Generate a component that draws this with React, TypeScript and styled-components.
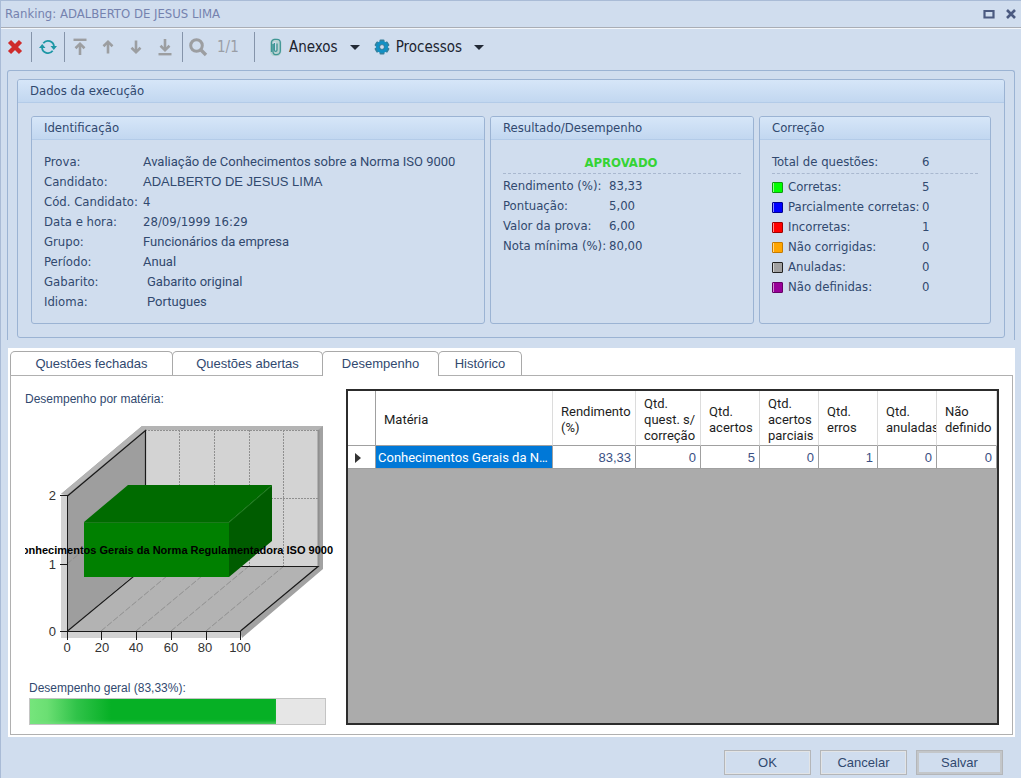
import React from "react";
import styled, { createGlobalStyle } from "styled-components";

const UI = `"DejaVu Sans Condensed", "DejaVu Sans", sans-serif`;
const SANS = `"Liberation Sans", Arial, sans-serif`;
const VALUE = `Roboto, "Liberation Sans", sans-serif`;
const INK = "#31496f";
const LINE = "#9bb3d3";

const GlobalStyle = createGlobalStyle`
  *, *::before, *::after { box-sizing: border-box; }
  body { margin: 0; background: #d0ddee; }
  button { font: inherit; color: inherit; cursor: pointer; }
`;

const Window = styled.div`
  min-height: 100vh;
  display: flex;
  flex-direction: column;
  background: #d0ddee;
  border-left: 1px solid #a9bbd6;
  border-top: 1px solid #a9bbd6;
  color: ${INK};
  font: 13px/20px ${SANS};
`;

const TitleBar = styled.header`
  height: 27px;
  flex: none;
  display: flex;
  align-items: center;
  justify-content: space-between;
  padding: 0 4px;
  border-bottom: 1px solid #a9adb5;
  box-shadow: 0 1px 0 #f3f6fa;
`;

const Title = styled.h1`
  margin: 0;
  font: 13px/20px ${UI};
  color: #7582ae;
`;

const WindowButtons = styled.div`
  display: flex;
  gap: 10px;
`;

const WindowButton = styled.button`
  display: flex;
  padding: 0;
  border: 0;
  background: none;
`;

const Toolbar = styled.div`
  height: 42px;
  flex: none;
  display: flex;
  align-items: center;
  padding-bottom: 4px;
  font: 15px/20px ${UI};
  color: #1c2430;
`;

const Tool = styled.button<{ $width: number }>`
  width: ${(p) => p.$width}px;
  height: 30px;
  flex: none;
  display: flex;
  align-items: center;
  justify-content: center;
  padding: 0;
  border: 0;
  background: none;
`;

const MenuTool = styled.button`
  display: flex;
  align-items: center;
  gap: 6px;
  height: 30px;
  padding: 0 0 0 14px;
  border: 0;
  background: none;
`;

const Separator = styled.span`
  width: 1px;
  height: 30px;
  margin: 0 1px 0 2px;
  background: #8594aa;
`;

const Counter = styled.output`
  width: 40px;
  padding-left: 5px;
  color: #9a9ea6;
`;

const Caret = styled.span`
  margin-left: 6px;
  border: 5px solid transparent;
  border-top-color: #222a36;
  border-bottom: 0;
`;

const Frame = styled.div`
  margin: 0 6px 0 6px;
  padding: 8px 9px 2px;
  border: 1px solid ${LINE};
  border-bottom: 0;
  border-radius: 3px 3px 0 0;
`;

const Group = styled.section`
  border: 1px solid ${LINE};
  border-radius: 3px;
`;

const GroupTitle = styled.h2`
  height: 23px;
  margin: 0;
  padding: 1px 12px;
  border-bottom: 1px solid #b3cbe8;
  border-radius: 2px 2px 0 0;
  background: linear-gradient(#d6e6f8, #c2d7f0);
  font: 13px/20px ${UI};
`;

const GroupGrid = styled.div`
  display: grid;
  grid-template-columns: 454fr 264fr 232fr;
  gap: 5px;
  padding: 13px;
`;

const GroupBody = styled.div`
  height: 183px;
  padding: 12px 12px 0;
`;

const Fields = styled.dl<{ $label: number }>`
  display: grid;
  grid-template-columns: ${(p) => p.$label}px 1fr;
  grid-auto-rows: 20px;
  margin: 0;
`;

const Term = styled.dt`
  display: flex;
  align-items: center;
  gap: 5px;
  font: 13px/20px ${UI};
  white-space: nowrap;
`;

const Value = styled.dd<{ $indent?: boolean; $family?: string }>`
  margin: 0;
  padding-left: ${(p) => (p.$indent ? 4 : 0)}px;
  font-family: ${(p) => p.$family ?? VALUE};
  white-space: nowrap;
`;

const Verdict = styled.p`
  margin: 0 0 2px;
  padding-right: 2px;
  border-bottom: 1px dashed #a9b8cf;
  font: bold 13px/21px ${UI};
  text-align: center;
  color: #35d435;
`;

const Total = styled(Fields)`
  margin-bottom: 3px;
  padding-bottom: 1px;
  border-bottom: 1px dashed #a9b8cf;
`;

const Swatch = styled.span<{ $fill: string; $edge: string }>`
  width: 11px;
  height: 11px;
  border: 1px solid ${(p) => p.$edge};
  border-radius: 1px;
  background: ${(p) => p.$fill};
  box-shadow: inset 1px 0 0 rgba(255, 255, 255, 0.55);
`;

const Sheet = styled.main`
  flex: 1;
  display: flex;
  flex-direction: column;
  margin: 8px 6px 0 7px;
  padding: 3px 2px 2px;
  background: #fff;
`;

const Tabs = styled.div`
  display: flex;
  height: 24px;
  flex: none;
`;

const Tab = styled.button<{ $width: number; $active?: boolean }>`
  width: ${(p) => p.$width}px;
  height: ${(p) => (p.$active ? 25 : 24)}px;
  z-index: ${(p) => (p.$active ? 1 : 0)};
  padding: 0 0 ${(p) => (p.$active ? 1 : 0)}px;
  border: 1px solid #a9a9a9;
  border-bottom: 0;
  border-radius: 5px 5px 0 0;
  background: #fff;
  font: 13px/22px ${SANS};
  & + & { margin-left: -1px; }
`;

const TabPanel = styled.div`
  flex: 1;
  display: flex;
  gap: 6px;
  padding: 13px 13px 9px 14px;
  border: 1px solid #b0b0b0;
`;

const ChartColumn = styled.div`
  width: 315px;
  flex: none;
  display: flex;
  flex-direction: column;
`;

const Caption = styled.p`
  margin: 0;
  font-size: 12px;
`;

const Chart = styled.svg`
  display: block;
  margin-top: 6px;
  font: 13px ${SANS};
  fill: #333;
`;

const Overall = styled.div`
  margin-top: auto;
  padding: 0 14px 0 4px;
`;

const Track = styled.div`
  height: 27px;
  border: 1px solid #c4c4c4;
  background: #e6e6e6;
`;

const Fill = styled.div`
  height: 100%;
  background: linear-gradient(90deg, #76e57c 0, #6bdf73 7%, #30c349 19%, #06b025 33%);
  box-shadow: inset 0 -3px 3px -1px rgba(120, 225, 130, 0.6);
`;

const GridBox = styled.div`
  flex: 1;
  min-width: 0;
  border: 2px solid #2c2c2c;
  background: #ababab;
`;

const Table = styled.table`
  width: 100%;
  table-layout: fixed;
  border-collapse: separate;
  border-spacing: 0;
  background: #fff;
`;

const Col = styled.col<{ $width?: number }>`
  width: ${(p) => (p.$width ? p.$width + "px" : "auto")};
`;

const HeadCell = styled.th`
  height: 55px;
  padding: 3px 0 0 8px;
  overflow: hidden;
  border-right: 1px solid #dcdcdc;
  border-bottom: 1px solid #a0a0a0;
  font: 13px/16px ${VALUE};
  text-align: left;
  color: #1d1d22;
  &:first-child { border-right-color: #a0a0a0; }
`;

const Cell = styled.td<{ $selected?: boolean }>`
  height: 23px;
  padding: ${(p) => (p.$selected ? "1px 1px 0 2px" : "1px 4px 0 3px")};
  overflow: hidden;
  border-right: 1px solid #a0a0a0;
  border-bottom: 1px solid #a0a0a0;
  background: ${(p) => (p.$selected ? "#0078d7" : "#fff")};
  color: ${(p) => (p.$selected ? "#fff" : "#3a5084")};
  font: 13px/20px ${(p) => (p.$selected ? VALUE : SANS)};
  text-align: ${(p) => (p.$selected ? "left" : "right")};
  text-overflow: ellipsis;
  white-space: nowrap;
`;

const RowMarker = styled.span`
  display: block;
  width: 0;
  margin-left: 4px;
  border: 5px solid transparent;
  border-left: 6px solid #333;
  border-right: 0;
`;

const Footer = styled.footer`
  height: 41px;
  flex: none;
  display: flex;
  justify-content: flex-end;
  align-items: flex-start;
  gap: 9px;
  padding: 13px 18px 0;
`;

const DialogButton = styled.button<{ $default?: boolean }>`
  width: 87px;
  height: 25px;
  padding: 0;
  border: 1px solid #b4b6b9;
  background: #d0ddee;
  box-shadow: inset 0 0 0 ${(p) => (p.$default ? 2 : 1)}px ${(p) => (p.$default ? "#c3c6c9" : "#e2e4e6")};
  font: 13px/20px ${SANS};
`;

const GREY = "#9c9ea1";

const ArrowIcon = ({ down, bar }: { down?: boolean; bar?: boolean }) => (
  <svg width="16" height="18" viewBox="0 0 16 18" fill="none" stroke={GREY} strokeWidth="2.6">
    <g transform={down ? "rotate(180 8 9)" : undefined}>
      {bar && <path d="M1.5 1.8h13" strokeWidth="2.4" />}
      <path d={bar ? "M8 17V6" : "M8 15.500V4.500"} />
      <path d={bar ? "M3.500 10.200L8 5.800l4.500 4.400" : "M3.500 8.200L8 3.800l4.500 4.400"} />
    </g>
  </svg>
);

const DeleteIcon = () => (
  <svg width="16" height="16" viewBox="0 0 16 16" stroke="#cf2b2b" strokeWidth="4.4">
    <path d="M2.500 2.500l11 11M13.500 2.500l-11 11" />
  </svg>
);

const RefreshIcon = () => (
  <svg width="18" height="16" viewBox="0 0 18 16" fill="none" stroke="#1d97a5" strokeWidth="1.8">
    <path d="M4.300 4.200A6 6 0 0 1 15 7.500M13.700 11.800A6 6 0 0 1 3 8.500" />
    <path d="M11.500 7h6.500l-3.200 4zM0 9h6.500L3.200 5z" fill="#1d97a5" stroke="none" />
  </svg>
);

const SearchIcon = () => (
  <svg width="20" height="20" viewBox="0 0 20 20" fill="none" stroke={GREY}>
    <circle cx="8.500" cy="8.500" r="5.800" strokeWidth="3" />
    <path d="M12.500 12.500l5.500 5.500" strokeWidth="3.400" />
  </svg>
);

const ClipIcon = () => (
  <svg width="13" height="18" viewBox="0 0 13 18" fill="none">
    <path
      d="M3.500 5.500v7.300a2 2 0 0 0 4 0V5a3 3 0 0 0-6 0v8a3.800 3.800 0 0 0 8.500 0V3.500"
      stroke="#b9d2d2"
      strokeWidth="3"
    />
    <path
      d="M7 5.500v6.500a1.200 1.200 0 0 1-2.600 0V5M1.500 14V4.500A3.300 3.300 0 0 1 5 1.300h2a3.300 3.300 0 0 1 3.300 3.300V13a3.800 3.800 0 0 1-3.800 3.700c-1.800 0-3.500-1-3.500-3V6"
      stroke="#3f9696"
      strokeWidth="1.300"
    />
  </svg>
);

const GearIcon = () => (
  <svg width="16" height="16" viewBox="0 0 16 16">
    {[0, 60, 120].map((a) => (
      <rect key={a} x="5.500" y="0.500" width="5" height="15" rx="1" fill="#37809c" transform={`rotate(${a} 8 8)`} />
    ))}
    <circle cx="8" cy="8" r="6" fill="#1290c4" />
    <circle cx="8" cy="8" r="2.400" fill="#d0ddee" stroke="#2d6c86" strokeWidth="0.800" />
  </svg>
);

const PerformanceChart = () => (
  <Chart width="309" height="245" viewBox="0 0 309 245" role="img" aria-label="Desempenho por matéria">
    <path d="M42 80L36 79 117 11H298V154L217 223 215 216z" fill="#a2a2a2" />
    <path d="M36 79L117 11H298L293 15H120L42 80z" fill="#b4b4b4" />
    <path d="M36 80h6v137h173v6H36z" fill="#d3d3d3" />
    <path d="M120 15H293V151H120z" fill="#d3d3d3" />
    <path d="M42 80L120 15V151L42 216z" fill="#9e9e9e" />
    <path d="M42 216L120 151H293L215 216z" fill="#b3b3b3" />
    <g stroke="#8f8f8f" fill="none">
      <path d="M154.500 15V151M189.500 15V151M224.500 15V151M258.500 15V151M120 15.500H293M120 83.500H293" strokeDasharray="2 1" />
      <path d="M76 216L154 151M111 216L189 151M146 216L224 151M181 216L259 151M42 149L120 83" strokeDasharray="6 2" />
      <path d="M293.500 15V151" strokeWidth="2" />
    </g>
    <g stroke="#1a1a1a" fill="none">
      <path d="M42.500 81L120.500 15.500V151M42.500 216L120.500 151.500H293L215.500 216" strokeWidth="1.200" />
      <path d="M42.500 80V225M35 80.500h7M35 149.500h7M35 216.500H216M76.500 216v9M111.500 216v9M146.500 216v9M181.500 216v9M215.500 216v9" />
    </g>
    <path d="M59 107H204V162H59z" fill="#008000" />
    <path d="M59 107L103 70H247L204 107z" fill="#006b00" />
    <path d="M204 107L247 70V126L204 162z" fill="#005c00" />
    <path d="M59 107.500H204L247 70.500" fill="none" stroke="#1c7a1c" />
    <g textAnchor="end">
      <text x="31" y="85">2</text>
      <text x="31" y="154">1</text>
      <text x="31" y="221">0</text>
    </g>
    <g textAnchor="middle">
      {[0, 20, 40, 60, 80, 100].map((n, i) => (
        <text key={n} x={42 + Math.round(i * 34.6)} y="237">{n}</text>
      ))}
    </g>
    <text x="308" y="139" textAnchor="end" fontSize="11" fontWeight="bold" fill="#000">
      Conhecimentos Gerais da Norma Regulamentadora ISO 9000
    </text>
  </Chart>
);

const identification: { label: string; value: string; indent?: boolean; family?: string }[] = [
  { label: "Prova:", value: "Avaliação de Conhecimentos sobre a Norma ISO 9000" },
  { label: "Candidato:", value: "ADALBERTO DE JESUS LIMA", family: SANS },
  { label: "Cód. Candidato:", value: "4", family: UI },
  { label: "Data e hora:", value: "28/09/1999 16:29", family: UI },
  { label: "Grupo:", value: "Funcionários da empresa" },
  { label: "Período:", value: "Anual" },
  { label: "Gabarito:", value: "Gabarito original", indent: true },
  { label: "Idioma:", value: "Portugues", indent: true },
];

const results = [
  ["Rendimento (%):", "83,33"],
  ["Pontuação:", "5,00"],
  ["Valor da prova:", "6,00"],
  ["Nota mínima (%):", "80,00"],
];

const corrections = [
  { label: "Corretas:", value: 5, fill: "#00ff00", edge: "#0e9a0e" },
  { label: "Parcialmente corretas:", value: 0, fill: "#0000ff", edge: "#00008f" },
  { label: "Incorretas:", value: 1, fill: "#ff0000", edge: "#a00000" },
  { label: "Não corrigidas:", value: 0, fill: "#ffa500", edge: "#c67a00" },
  { label: "Anuladas:", value: 0, fill: "#a0a0a0", edge: "#222222" },
  { label: "Não definidas:", value: 0, fill: "#990099", edge: "#660066" },
];

const columns = [
  { title: "Rendimento (%)", value: "83,33", width: 83 },
  { title: "Qtd. quest. s/ correção", value: "0", width: 65 },
  { title: "Qtd. acertos", value: "5", width: 59 },
  { title: "Qtd. acertos parciais", value: "0", width: 59 },
  { title: "Qtd. erros", value: "1", width: 59 },
  { title: "Qtd. anuladas", value: "0", width: 59 },
  { title: "Não definido", value: "0", width: 60 },
];

const tabs = [
  { title: "Questões fechadas", width: 163 },
  { title: "Questões abertas", width: 151 },
  { title: "Desempenho", width: 117, active: true },
  { title: "Histórico", width: 84 },
];

export default function App() {
  return (
    <Window>
      <GlobalStyle />
      <TitleBar>
        <Title>Ranking: ADALBERTO DE JESUS LIMA</Title>
        <WindowButtons>
          <WindowButton aria-label="Maximizar">
            <svg width="12" height="12" viewBox="0 0 12 12">
              <path d="M1.500 3h9v6.500h-9z" fill="none" stroke="#4b5a80" strokeWidth="2.200" />
            </svg>
          </WindowButton>
          <WindowButton aria-label="Fechar">
            <svg width="12" height="12" viewBox="0 0 12 12">
              <path d="M2 2l8 8M10 2l-8 8" stroke="#4b5a80" strokeWidth="2.600" />
            </svg>
          </WindowButton>
        </WindowButtons>
      </TitleBar>

      <Toolbar role="toolbar">
        <Tool $width={28} aria-label="Excluir"><DeleteIcon /></Tool>
        <Separator />
        <Tool $width={29} aria-label="Atualizar"><RefreshIcon /></Tool>
        <Separator />
        <Tool $width={28} aria-label="Primeiro"><ArrowIcon bar /></Tool>
        <Tool $width={28} aria-label="Anterior"><ArrowIcon /></Tool>
        <Tool $width={28} aria-label="Próximo"><ArrowIcon down /></Tool>
        <Tool $width={30} aria-label="Último"><ArrowIcon down bar /></Tool>
        <Separator />
        <Tool $width={28} aria-label="Pesquisar"><SearchIcon /></Tool>
        <Counter>1/1</Counter>
        <Separator />
        <MenuTool><ClipIcon />Anexos<Caret /></MenuTool>
        <MenuTool><GearIcon />Processos<Caret /></MenuTool>
      </Toolbar>

      <Frame>
        <Group>
          <GroupTitle>Dados da execução</GroupTitle>
          <GroupGrid>
            <Group>
              <GroupTitle>Identificação</GroupTitle>
              <GroupBody>
                <Fields $label={99}>
                  {identification.map((f) => (
                    <React.Fragment key={f.label}>
                      <Term>{f.label}</Term>
                      <Value $indent={f.indent} $family={f.family}>{f.value}</Value>
                    </React.Fragment>
                  ))}
                </Fields>
              </GroupBody>
            </Group>
            <Group>
              <GroupTitle>Resultado/Desempenho</GroupTitle>
              <GroupBody>
                <Verdict>APROVADO</Verdict>
                <Fields $label={106}>
                  {results.map(([label, value]) => (
                    <React.Fragment key={label}>
                      <Term>{label}</Term>
                      <Value $family={UI}>{value}</Value>
                    </React.Fragment>
                  ))}
                </Fields>
              </GroupBody>
            </Group>
            <Group>
              <GroupTitle>Correção</GroupTitle>
              <GroupBody>
                <Total $label={150}>
                  <Term>Total de questões:</Term>
                  <Value $family={UI}>6</Value>
                </Total>
                <Fields $label={150}>
                  {corrections.map((c) => (
                    <React.Fragment key={c.label}>
                      <Term><Swatch $fill={c.fill} $edge={c.edge} />{c.label}</Term>
                      <Value $family={UI}>{c.value}</Value>
                    </React.Fragment>
                  ))}
                </Fields>
              </GroupBody>
            </Group>
          </GroupGrid>
        </Group>
      </Frame>

      <Sheet>
        <Tabs role="tablist">
          {tabs.map((t) => (
            <Tab key={t.title} role="tab" aria-selected={!!t.active} $width={t.width} $active={t.active}>
              {t.title}
            </Tab>
          ))}
        </Tabs>
        <TabPanel role="tabpanel">
          <ChartColumn>
            <Caption>Desempenho por matéria:</Caption>
            <PerformanceChart />
            <Overall>
              <Caption id="overall">Desempenho geral (83,33%):</Caption>
              <Track role="progressbar" aria-labelledby="overall" aria-valuenow={83.33}>
                <Fill style={{ width: "83.33%" }} />
              </Track>
            </Overall>
          </ChartColumn>
          <GridBox>
            <Table>
              <colgroup>
                <Col $width={28} />
                <Col />
                {columns.map((c) => <Col key={c.title} $width={c.width} />)}
              </colgroup>
              <thead>
                <tr>
                  <HeadCell aria-label="Linha" />
                  <HeadCell scope="col">Matéria</HeadCell>
                  {columns.map((c) => <HeadCell key={c.title} scope="col">{c.title}</HeadCell>)}
                </tr>
              </thead>
              <tbody>
                <tr>
                  <Cell><RowMarker /></Cell>
                  <Cell $selected>Conhecimentos Gerais da Norma Regulamentadora ISO 9000</Cell>
                  {columns.map((c) => <Cell key={c.title}>{c.value}</Cell>)}
                </tr>
              </tbody>
            </Table>
          </GridBox>
        </TabPanel>
      </Sheet>

      <Footer>
        <DialogButton>OK</DialogButton>
        <DialogButton>Cancelar</DialogButton>
        <DialogButton $default>Salvar</DialogButton>
      </Footer>
    </Window>
  );
}
